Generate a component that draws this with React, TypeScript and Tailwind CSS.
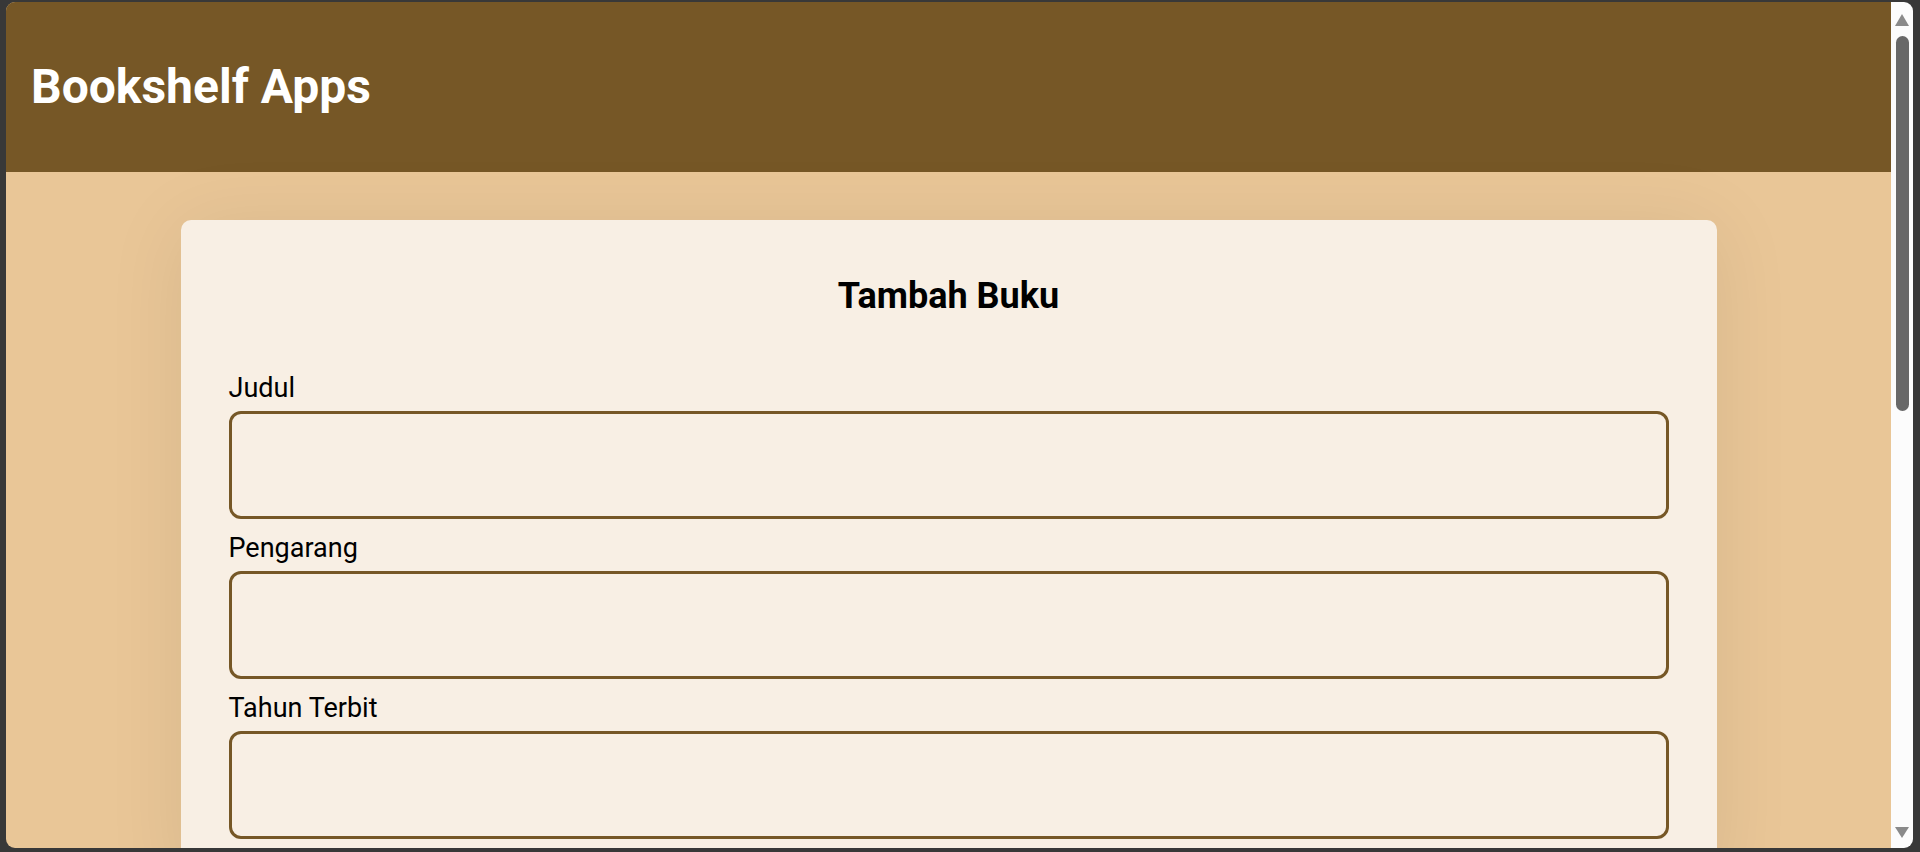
import React from "react";

const fields = ["Judul", "Pengarang", "Tahun Terbit"];

export default function App() {
  return (
    <div
      className="w-[1920px] h-[852px] bg-[#383838] pt-[2px] pl-[6px] pr-[7px] pb-[4px] overflow-hidden"
      style={{ fontFamily: "Roboto, 'Liberation Sans', sans-serif" }}
    >
      <div className="flex h-full rounded-[9px] overflow-hidden">
        <div className="flex-1 h-full overflow-hidden bg-[#E9C697] flex flex-col">
          <header className="h-[170px] shrink-0 bg-[#765726] flex items-center pl-[25px]">
            <h1 className="text-white text-[48px] font-bold leading-[56px]">Bookshelf Apps</h1>
          </header>
          <main className="pt-[48px] flex justify-center">
            <section className="w-[1536px] rounded-[10px] bg-[#F8EFE4] px-[48px] pt-[55px] pb-[48px] shadow-[0_6px_80px_rgba(0,0,0,0.08)]">
              <h2 className="text-center text-black text-[36px] font-bold leading-[42px]">Tambah Buku</h2>
              <form className="mt-[56px] flex flex-col gap-[14px]">
                {fields.map((f) => (
                  <div key={f} className="flex flex-col gap-[7px]">
                    <label className="text-black text-[27px] leading-[31px]">{f}</label>
                    <input
                      type="text"
                      className="h-[108px] w-full border-[3px] border-[#765726] rounded-[12px] bg-transparent outline-none"
                    />
                  </div>
                ))}
              </form>
            </section>
          </main>
        </div>
        <div className="w-[22px] h-full bg-[#fcfcfc] flex flex-col items-center relative">
          <div className="mt-[12px] w-0 h-0 border-l-[7px] border-r-[7px] border-b-[12px] border-l-transparent border-r-transparent border-b-[#8a8a8a]" />
          <div className="mt-[10px] w-[13px] h-[375px] rounded-full bg-[#686868]" />
          <div className="mt-auto mb-[10px] w-0 h-0 border-l-[7px] border-r-[7px] border-t-[11px] border-l-transparent border-r-transparent border-t-[#8a8a8a]" />
        </div>
      </div>
    </div>
  );
}
